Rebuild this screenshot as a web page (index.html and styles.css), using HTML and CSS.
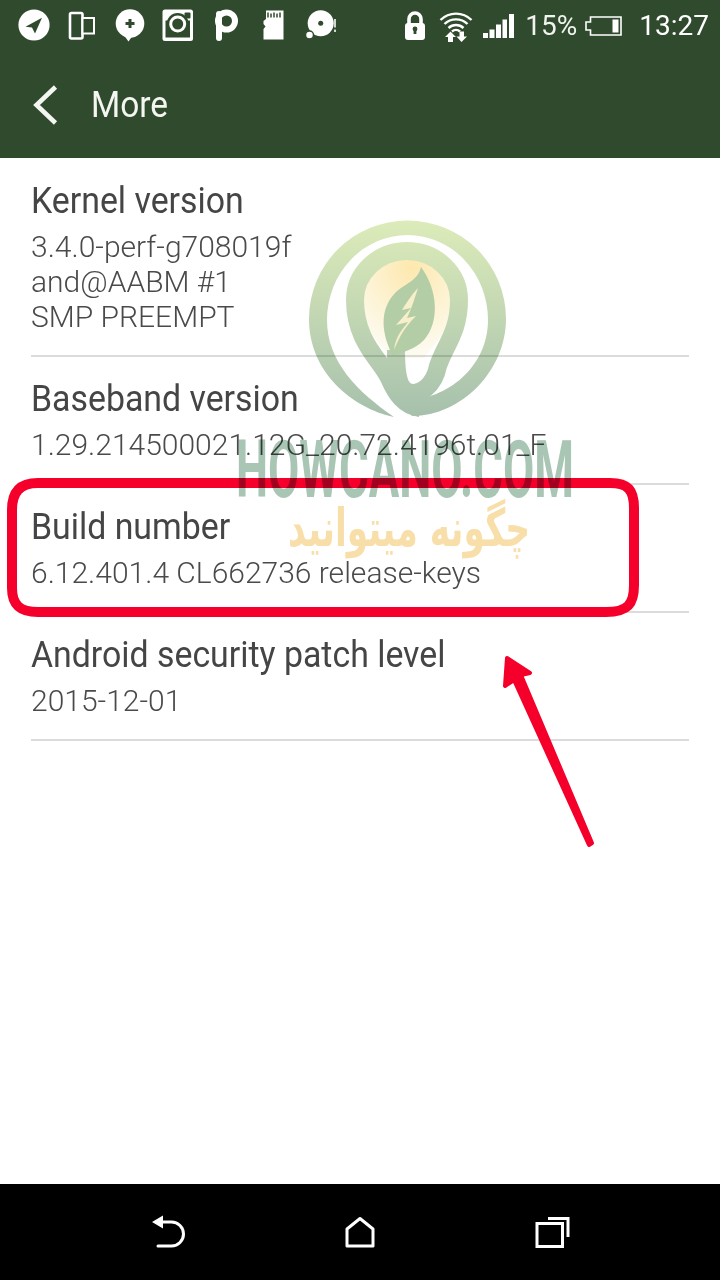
FILE: index.html
```html
<!DOCTYPE html>
<html lang="en">
<head>
  <meta charset="UTF-8">
  <title>More</title>
  <link rel="stylesheet" href="styles.css">
</head>
<body>
  <div class="pantalla">
    <header class="cabecera">
      <div class="estado">
        <div class="iconos-app">
          <svg class="slot" viewBox="0 0 48 48"><circle cx="24" cy="24" r="15.6" fill="#fff"/><path d="M32 16.800L15.500 25.800 22 26.500 25 32.500Z" fill="#304a2d"/></svg>
          <svg class="slot" viewBox="0 0 48 48"><rect x="12" y="12" width="12.500" height="25.500" rx="1.500" fill="none" stroke="#fff" stroke-width="2.600"/><rect x="24.500" y="17" width="11.500" height="15.500" fill="#304a2d" stroke="#fff" stroke-width="2"/></svg>
          <svg class="slot" viewBox="0 0 48 48"><circle cx="24" cy="22.500" r="14.300" fill="#fff"/><path d="M17 33L22.500 40.500 27 34Z" fill="#fff"/><path d="M24 18V27M19.500 22.500H28.500" stroke="#304a2d" stroke-width="3"/></svg>
          <svg class="slot" viewBox="0 0 48 48"><rect x="8.500" y="8.500" width="30.500" height="31.500" rx="2.500" fill="#fff"/><rect x="11.500" y="19.500" width="24.500" height="17" fill="#304a2d"/><circle cx="23.700" cy="23" r="11" fill="#304a2d"/><circle cx="23.700" cy="23" r="8.500" fill="#fff"/><circle cx="23.700" cy="23" r="5.500" fill="#304a2d"/><rect x="30.500" y="11.500" width="6" height="6" rx="1" fill="#304a2d"/></svg>
          <svg class="slot" viewBox="0 0 48 48"><path d="M17 13V37" stroke="#fff" stroke-width="6" stroke-linecap="round"/><circle cx="24.500" cy="20" r="8.500" fill="none" stroke="#fff" stroke-width="6"/></svg>
          <svg class="slot" viewBox="0 0 48 48"><path d="M16 9.500H33.500V38.500H13.500V28L15.500 25.500 13.500 23V20L16 18Z" fill="#fff"/><path d="M18 11.500V16.500M21 12.500V16.500M24 11.500V16.500M27 12.500V16.500M30 11.500V16.500" stroke="#304a2d" stroke-width="1.500"/></svg>
          <svg class="slot" viewBox="0 0 48 48"><circle cx="22.700" cy="22.300" r="13" fill="#fff"/><circle cx="22.700" cy="22.300" r="2.500" fill="#304a2d"/><circle cx="11.500" cy="34" r="4" fill="#fff" stroke="#304a2d" stroke-width="1.500"/><path d="M37 18V26.500M37 28.500V31" stroke="#cfd8cd" stroke-width="2"/></svg>
        </div>
        <div class="iconos-sistema">
          <svg class="candado" viewBox="0 0 20 29"><path d="M4 13V8A6 6 0 0 1 16 8V13" fill="none" stroke="#fff" stroke-width="3.600"/><rect x="0" y="12" width="20" height="17" rx="3" fill="#fff"/><path d="M10 16.500V23" stroke="#304a2d" stroke-width="2.800"/><circle cx="10" cy="18" r="2.400" fill="#304a2d"/></svg>
          <svg class="wifi" viewBox="0 0 34 32"><path d="M1.500 10A22 22 0 0 1 32.500 10M5.500 14A16.500 16.500 0 0 1 28.500 14M9.500 18A11 11 0 0 1 24.500 18M13 21.500A6 6 0 0 1 21 21.500" fill="none" stroke="#fff" stroke-width="2.400"/><path d="M11.500 21.500L17 27H14V32H9V27H6ZM22.500 32L17.500 26.500H20.500V21.500H25V26.500H28Z" fill="#fff"/></svg>
          <svg class="senal" viewBox="0 0 31 24"><path d="M0 19H5V24H0ZM6.500 15.500H11.500V24H6.500ZM13 10.500H18V24H13ZM19.500 5.500H24V24H19.500ZM26 0H31V24H26Z" fill="#fff"/></svg>
          <span class="porcentaje">15%</span>
          <svg class="bateria" viewBox="0 0 37 20"><path d="M5.500 1H36V19H5.500V14H1V6H5.500Z" fill="none" stroke="#fff" stroke-width="1.600"/><rect x="27.500" y="3.500" width="6" height="13" fill="#fff"/></svg>
          <span class="hora">13:27</span>
        </div>
      </div>
      <div class="barra">
        <svg class="atras" viewBox="0 0 28 40"><path d="M24.500 2L5.500 20 24.500 38" fill="none" stroke="#f4f6f2" stroke-width="4.600"/></svg>
        <span class="barra-titulo">More</span>
      </div>
    </header>

    <main class="lista">
      <div class="fila">
        <div class="fila-titulo">Kernel version</div>
        <div class="fila-valor">3.4.0-perf-g708019f</div>
        <div class="fila-valor">and@AABM #1</div>
        <div class="fila-valor">SMP PREEMPT</div>
      </div>
      <div class="fila">
        <div class="fila-titulo">Baseband version</div>
        <div class="fila-valor">1.29.214500021.12G_20.72.4196t.01_F</div>
      </div>
      <div class="fila">
        <div class="fila-titulo">Build number</div>
        <div class="fila-valor">6.12.401.4 CL662736 release-keys</div>
      </div>
      <div class="fila">
        <div class="fila-titulo">Android security patch level</div>
        <div class="fila-valor">2015-12-01</div>
      </div>
    </main>

    <nav class="navegacion">
      <svg class="slot" viewBox="0 0 48 48"><path d="M8 14L19 7.500V20.500Z" fill="#fff"/><path d="M17 14H27.500A12 12 0 0 1 27.500 38H14" fill="none" stroke="#fff" stroke-width="3" stroke-linecap="round"/></svg>
      <svg class="slot" viewBox="0 0 48 48"><path d="M24 10.500L37 21V38H11V21Z" fill="none" stroke="#fff" stroke-width="3" stroke-linejoin="round"/></svg>
      <svg class="slot" viewBox="0 0 48 48"><rect x="9" y="15.500" width="25.500" height="23" fill="none" stroke="#fff" stroke-width="3"/><path d="M20 10.500H40V29" fill="none" stroke="#fff" stroke-width="3"/></svg>
    </nav>

    <!-- marca de agua y anotaciones sobre la captura -->
    <svg class="encima" viewBox="0 0 720 1280">
      <defs>
        <linearGradient id="verde" gradientUnits="userSpaceOnUse" x1="0" y1="222" x2="0" y2="417">
          <stop offset="0" stop-color="#dcebb9"/>
          <stop offset="1" stop-color="#a6c0ac"/>
        </linearGradient>
        <radialGradient id="crema" cx="0.55" cy="0.15" r="0.8">
          <stop offset="0" stop-color="#fde8ae"/>
          <stop offset="1" stop-color="#fdfbf0"/>
        </radialGradient>
      </defs>
      <path class="marco" d="M38 483H610C628 483 634 490 634 508V585C634 604 628 612 606 612H38C20 612 12 605 12 588V510C12 492 20 483 38 483Z"/>
      <path class="flecha" d="M507 658L530 673 521 675 592 843 589 845 514 680 505 686Z"/>
      <g class="logo">
        <path d="M407 252C375 252 358 275 360 302C362 328 378 342 392 358H424C436 342 452 328 454 302C456 275 439 252 407 252Z" fill="url(#crema)"/>
        <path d="M394 417C352 408 309 372 309 319A98.500 98.500 0 0 1 506 319C506 370 462 416 412 416L401 400C445 402 488 368 488 320A80.500 85 0 0 0 327 320C327 362 358 392 394 417Z" fill="url(#verde)"/>
        <path d="M420 408C404 406 396 394 389 378C381 360 355 342 355 300A52 49 0 1 1 459 300C459 332 445 345 438 366C434 386 420 396 408 392C398 388 396 370 396 350" fill="none" stroke="url(#verde)" stroke-width="18"/>
        <path d="M421 267C438 290 440 322 424 340C414 350 402 352 393 356C382 335 378 310 396 292C408 282 418 280 421 267Z" fill="#b3cda6"/>
        <path d="M394 350C396 335 402 330 408 322L396 325 411 308 402 310C408 300 414 292 418 288C413 304 410 312 407 318L416 316C404 328 400 336 394 350Z" fill="#f6efc9"/>
      </g>
      <text class="marca" x="236" y="497" textLength="338" lengthAdjust="spacingAndGlyphs">HOWCANO.COM</text>
      <text class="marca-fa" x="530" y="546" textLength="242" lengthAdjust="spacingAndGlyphs" direction="rtl">چگونه میتوانید</text>
    </svg>
  </div>
</body>
</html>
```

FILE: styles.css
```css
* {
  margin: 0;
  padding: 0;
  box-sizing: border-box;
}

html, body {
  height: 100%;
  font-family: 'Roboto', sans-serif;
  background-color: white;
}

.pantalla {
  position: relative;
  display: flex;
  flex-direction: column;
  width: 720px;
  height: 1280px;
  overflow: hidden;
}

.cabecera {
  height: 158px;
  background-color: #304a2d;
  color: white;
}

.estado {
  display: flex;
  height: 60px;
  padding: 1px 11px 0 10px;
}

.iconos-app {
  display: flex;
}

.slot {
  display: block;
  width: 48px;
  height: 48px;
}

.iconos-sistema {
  display: flex;
  align-items: center;
  height: 49px;
  margin-left: auto;
  color: #f0f3ee;
}

.candado { width: 20px; height: 29px; }
.wifi { width: 34px; height: 32px; margin-left: 14px; }
.senal { width: 31px; height: 24px; margin-left: 10px; }
.bateria { width: 37px; height: 20px; margin-left: 8px; }

.porcentaje {
  margin-left: 11px;
  font-size: 28px;
}

.hora {
  margin-left: 17px;
  font-size: 28px;
  color: white;
}

.barra {
  display: flex;
  align-items: center;
  height: 90px;
  padding-left: 31px;
}

.atras {
  width: 28px;
  height: 40px;
}

.barra-titulo {
  margin-left: 32px;
  font-size: 36px;
  color: #f4f6f2;
  transform: scaleX(0.93);
  transform-origin: left;
}

.lista {
  flex: 1;
  padding: 1px 31px 0;
}

.fila {
  padding: 19px 0 21px;
  border-bottom: 2px solid #dcdcdc;
}

.fila-titulo {
  height: 46px;
  margin-bottom: 5px;
  font-size: 36px;
  line-height: 46px;
  color: #454545;
  white-space: nowrap;
  transform: scaleX(0.94);
  transform-origin: left;
}

.fila-valor {
  height: 35px;
  font-size: 30px;
  font-weight: 300;
  line-height: 35px;
  color: #4a4a4a;
  white-space: nowrap;
}

.navegacion {
  display: grid;
  grid-template-columns: repeat(3, 1fr);
  justify-items: center;
  align-items: center;
  height: 96px;
  padding: 0 72px;
  background-color: black;
}

.encima {
  position: absolute;
  top: 0;
  left: 0;
  width: 720px;
  height: 1280px;
  pointer-events: none;
}

.logo {
  mix-blend-mode: multiply;
}

.marca {
  font-family: 'Roboto', sans-serif;
  font-size: 80px;
  font-weight: 700;
  fill: #a9c5b4;
  mix-blend-mode: multiply;
}

.marca-fa {
  font-family: 'DejaVu Sans', sans-serif;
  font-size: 52px;
  font-weight: bold;
  fill: #f8dfa9;
  mix-blend-mode: multiply;
}

.marco {
  fill: none;
  stroke: #f4002b;
  stroke-width: 10;
}

.flecha {
  fill: #f4002b;
  stroke: #f4002b;
  stroke-width: 4;
  stroke-linejoin: round;
}
```
